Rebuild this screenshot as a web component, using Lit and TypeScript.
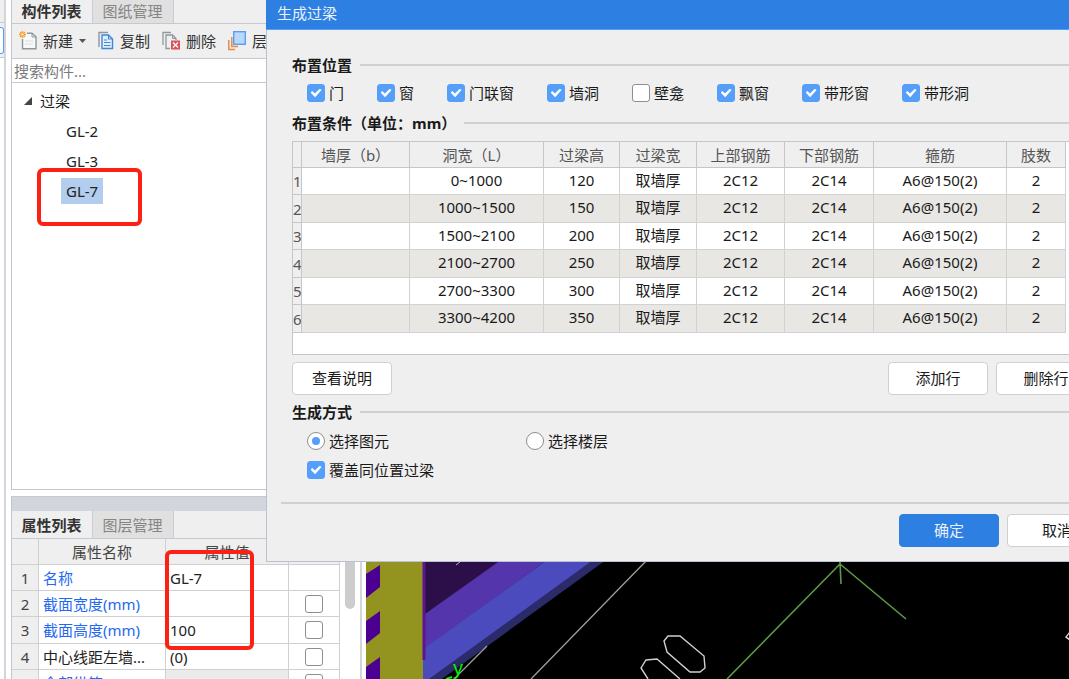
import { LitElement, html, css, svg } from "lit";
import { customElement, state } from "lit/decorators.js";

const controls = css`
  *, *::before, *::after { box-sizing: border-box; }
  button, input, table { font: inherit; color: inherit; }
  button { cursor: pointer; margin: 0; }
  input[type="checkbox"], input[type="radio"] {
    appearance: none;
    flex: none;
    display: grid;
    place-items: center;
    width: 18px;
    height: 18px;
    margin: 0;
    background: #fff;
    border: 1px solid #8e8e8e;
    border-radius: 3px;
  }
  input[type="radio"] { border-radius: 50%; }
  input[type="checkbox"]:checked { background: #559ffb; border-color: #559ffb; }
  input[type="checkbox"]:checked::after {
    content: "";
    width: 11px;
    height: 9px;
    background: #fff;
    clip-path: polygon(0 45%, 16% 28%, 40% 56%, 84% 2%, 100% 18%, 42% 96%);
  }
  input[type="radio"]:checked::after {
    content: "";
    width: 8px;
    height: 8px;
    border-radius: 50%;
    background: #559ffb;
  }
  table { border-collapse: separate; border-spacing: 0; table-layout: fixed; }
  th, td { padding: 0; overflow: hidden; white-space: nowrap; font-weight: 400; }
`;

const icons = {
  create: svg`<svg width="18" height="20" viewBox="0 0 18 20" fill="none">
    <path d="M4.5 6V17.5H17V5.5L13.5 2H8" fill="#f7f8f8"/>
    <path d="M3.5 8V17.8H17V5.8L13 2.2H8" stroke="#8f979c" stroke-width="1.4"/>
    <path d="M13 2.2V6H17" stroke="#8f979c"/>
    <path d="M6 10H14M6 13H14" stroke="#d8dcde"/>
    <path d="M3.5 0V7M0 3.5H7M1 1L6 6M6 1L1 6" stroke="#f5a12d" stroke-width="1.3"/>
    <circle cx="3.5" cy="3.5" r="1.1" fill="#fff"/>
  </svg>`,
  copy: svg`<svg width="16" height="20" viewBox="0 0 16 20" fill="none">
    <path d="M1 16V1.5H10" stroke="#8f979c" stroke-width="1.4"/>
    <path d="M4 4H10.5L14.5 8V17.5H4Z" fill="#e3f0fd" stroke="#3f85dc" stroke-width="1.4"/>
    <path d="M10.5 4V8H14.5M6 9H9M6 11.5H12.5M6 14.5H12.5" stroke="#3f85dc" stroke-width="1.2"/>
  </svg>`,
  remove: svg`<svg width="18" height="20" viewBox="0 0 18 20" fill="none">
    <path d="M1 14V1.5H9" stroke="#8f979c" stroke-width="1.3"/>
    <path d="M8 17.5H4V4H10.5L14 7.5V9" stroke="#8f979c" stroke-width="1.3"/>
    <path d="M10.5 4V7.5H14" stroke="#8f979c"/>
    <rect x="9" y="9.5" width="9" height="9" fill="#d95359"/>
    <path d="M11 11.5L16 16.5M16 11.5L11 16.5" stroke="#fff" stroke-width="1.3"/>
  </svg>`,
  layers: svg`<svg width="18" height="20" viewBox="0 0 18 20" fill="none">
    <path d="M.8 9V18.5H7" stroke="#e58a4b" stroke-width="1.5"/>
    <path d="M3.8 6V15.5H10" stroke="#e58a4b" stroke-width="1.5"/>
    <rect x="5.7" y=".7" width="11.6" height="12.6" fill="#b7d8ff" stroke="#5b9fec" stroke-width="1.4"/>
  </svg>`,
};

@customElement("component-panel")
class ComponentPanel extends LitElement {
  static styles = [controls, css`
    :host { display: flex; flex-direction: column; min-width: 0; min-height: 0; }
    .upper { flex: 1; min-height: 0; display: flex; flex-direction: column; border: 1px solid #c3c6cd; border-top: 0; background: #fff; }
    .tabs { flex: none; display: flex; height: 24px; background: #efefef; border-bottom: 1px solid #c6c9cf; overflow: hidden; }
    .tab { width: 81px; padding: 0 1px 4px 0; border: 0; border-right: 1px solid #c9ccd1; background: #efefef; font-weight: 700; color: #333; line-height: 22px; }
    .tab.idle { background: #e0e0e0; color: #858585; font-weight: 400; }
    .tools { flex: none; display: flex; align-items: center; gap: 12px; height: 35px; padding: 0 7px; background: #efefef; border-bottom: 1px solid #c6c9cf; overflow: hidden; }
    .tool { display: flex; align-items: center; gap: 6px; padding: 0; border: 0; background: none; white-space: nowrap; color: #333; line-height: 22px; }
    .arrow { width: 7px; height: 4px; background: #555; clip-path: polygon(0 0, 100% 0, 50% 100%); }
    .search { flex: none; width: 100%; height: 24px; padding: 0 2px; border: 0; border-bottom: 1px solid #c6c9cf; background: #fff; outline: none; }
    .search::placeholder { color: #7b7b7b; opacity: 1; }
    .tree { margin: 0; padding: 3px 12px; list-style: none; color: #222; }
    .tree ul { margin: 0; padding: 0 0 0 37px; list-style: none; }
    .node { display: flex; align-items: center; gap: 8px; height: 30px; }
    .leaf { padding: 0 5px; line-height: 26px; }
    .leaf.on { background: #b3cdee; }
    .twist { width: 8px; height: 8px; background: #444; clip-path: polygon(100% 0, 100% 100%, 0 100%); }
    .lower { flex: none; height: 183px; margin-top: 6px; border-left: 1px solid #c3c6cd; overflow: hidden; background: #fff; }
    .grip { height: 15px; background: #d2d5db; border-top: 1px solid #c6c9cf; }
    .lower .tabs { height: 28px; }
    .lower .tab { padding-bottom: 0; }
    .sheet { display: flex; align-items: flex-start; justify-content: space-between; }
    .props { width: 328px; color: #222; }
    .props th, .props td { height: 26px; line-height: 22px; border-right: 1px solid #d0d0d0; border-bottom: 1px solid #d0d0d0; }
    .props tbody tr:nth-child(3) > * { height: 27px; }
    .props td { padding-left: 4px; }
    .props th { background: #efefef; color: #444; }
    .props .key { color: #2468f2; }
    .props .plain { color: #222; }
    .props .blank { background: #ebebeb; }
    .props input { margin-left: 12px; }
    .c0 { width: 27px; } .c1 { width: 127px; } .c2 { width: 123px; } .c3 { width: 51px; }
    .bar { width: 10px; height: 70px; background: #cdcdcd; border-radius: 0 0 5px 5px; }
  `];

  @state() private selected = "GL-7";

  private rows = [
    { name: "名称", value: "GL-7", key: true, box: false },
    { name: "截面宽度(mm)", value: "", key: true, box: true },
    { name: "截面高度(mm)", value: "100", key: true, box: true },
    { name: "中心线距左墙...", value: "(0)", key: false, box: true },
    { name: "全部纵筋", value: "", key: true, box: true, blank: true },
  ];

  render() {
    return html`
      <section class="upper">
        <div class="tabs"><button class="tab">构件列表</button><button class="tab idle">图纸管理</button></div>
        <div class="tools">
          <button class="tool">${icons.create}新建<span class="arrow"></span></button>
          <button class="tool">${icons.copy}复制</button>
          <button class="tool">${icons.remove}删除</button>
          <button class="tool">${icons.layers}层间复制</button>
        </div>
        <input class="search" type="text" aria-label="搜索构件" placeholder="搜索构件..." />
        <ul class="tree">
          <li>
            <div class="node"><span class="twist"></span>过梁</div>
            <ul>
              ${["GL-2", "GL-3", "GL-7"].map((n) => html`
                <li class="node" @click=${() => (this.selected = n)}>
                  <span class="leaf ${n === this.selected ? "on" : ""}">${n}</span>
                </li>`)}
            </ul>
          </li>
        </ul>
      </section>
      <section class="lower">
        <div class="grip"></div>
        <div class="tabs"><button class="tab">属性列表</button><button class="tab idle">图层管理</button></div>
        <div class="sheet">
          <table class="props">
            <thead><tr><th class="c0"></th><th class="c1">属性名称</th><th class="c2">属性值</th><th class="c3"></th></tr></thead>
            <tbody>
              ${this.rows.map((r, i) => html`<tr>
                <th>${i + 1}</th>
                <td class=${r.key ? "key" : "plain"}>${r.name}</td>
                <td class=${r.blank ? "blank" : ""}>${r.value}</td>
                <td>${r.box ? html`<input type="checkbox" aria-label=${r.name} />` : ""}</td>
              </tr>`)}
            </tbody>
          </table>
          <div class="bar"></div>
        </div>
      </section>`;
  }
}

@customElement("lintel-dialog")
class LintelDialog extends LitElement {
  static styles = [controls, css`
    :host { display: flex; flex-direction: column; background: #efefef; border: 1px solid #b9c2d0; border-top: 0; color: #1a1a1a; }
    .title { margin: 0 0 0 -1px; padding: 0 11px; height: 30px; line-height: 26px; background: #2d7fe1; border-bottom: 1px solid #559ffb; color: #e8f1fc; font-size: 15px; font-weight: 400; }
    .body { display: flex; flex-direction: column; padding: 24px 25px 0; }
    .head { display: flex; align-items: center; gap: 8px; margin: 0; font-size: 15px; line-height: 22px; font-weight: 700; }
    .head::after { content: ""; flex: 1; height: 2px; background: #d0d0d0; }
    .picks { display: flex; gap: 33px; padding: 6px 15px 8px; }
    .pick { display: flex; align-items: center; gap: 4px; height: 22px; line-height: 22px; white-space: nowrap; }
    .grid { margin-top: 7px; padding-bottom: 21px; background: #fff; border: 1px solid #c6c6c6; }
    .rules { width: 773px; text-align: center; }
    .rules th, .rules td { height: 27px; line-height: 22px; border-right: 1px solid #d2d2d2; border-bottom: 1px solid #d2d2d2; }
    .rules thead th { height: 26px; background: #efefef; color: #555; border-color: #c6c6c6; }
    .rules tbody td { padding-bottom: 3px; }
    .rules tbody tr:nth-child(even) > * { height: 28px; }
    .rules tbody tr:nth-child(even) td { background: #e8e7e4; }
    .rules tbody th { background: #efefef; color: #555; border-color: #c6c6c6; }
    .w0 { width: 9px; } .w1 { width: 108px; } .w2 { width: 134px; } .w3 { width: 76px; } .w4 { width: 77px; }
    .w5 { width: 88px; } .w6 { width: 89px; } .w7 { width: 133px; } .w8 { width: 59px; }
    .actions { display: flex; gap: 8px; padding: 7px 0 6px; }
    .push { margin-left: auto; }
    .btn { width: 100px; height: 33px; padding: 0 0 1px; background: #fff; border: 1px solid #cfcfcf; border-radius: 4px; line-height: 22px; }
    .btn.primary { background: #2d7fe1; border-color: #2d7fe1; color: #e8f1fc; margin-left: auto; }
    .modes { display: grid; grid-template-columns: 219px 1fr; row-gap: 7px; padding: 7px 15px 21px; }
    .foot { display: flex; gap: 8px; margin: 0 14px; padding: 10px 0 14px; border-top: 2px solid #d0d0d0; }
  `];

  private places: [string, boolean][] = [
    ["门", true], ["窗", true], ["门联窗", true], ["墙洞", true],
    ["壁龛", false], ["飘窗", true], ["带形窗", true], ["带形洞", true],
  ];
  private columns = ["", "墙厚（b）", "洞宽（L）", "过梁高", "过梁宽", "上部钢筋", "下部钢筋", "箍筋", "肢数"];
  private spans: [string, string][] = [
    ["0~1000", "120"], ["1000~1500", "150"], ["1500~2100", "200"],
    ["2100~2700", "250"], ["2700~3300", "300"], ["3300~4200", "350"],
  ];

  render() {
    return html`
      <h1 class="title">生成过梁</h1>
      <div class="body">
        <h2 class="head">布置位置</h2>
        <div class="picks">
          ${this.places.map(([name, on]) => html`<label class="pick"><input type="checkbox" .checked=${on} />${name}</label>`)}
        </div>
        <h2 class="head">布置条件（单位：mm）</h2>
        <div class="grid">
          <table class="rules">
            <thead><tr>${this.columns.map((c, i) => html`<th class="w${i}">${c}</th>`)}</tr></thead>
            <tbody>
              ${this.spans.map(([span, height], i) => html`<tr>
                <th>${i + 1}</th><td></td><td>${span}</td><td>${height}</td><td>取墙厚</td>
                <td>2C12</td><td>2C14</td><td>A6@150(2)</td><td>2</td>
              </tr>`)}
            </tbody>
          </table>
        </div>
        <div class="actions">
          <button class="btn">查看说明</button>
          <button class="btn push">添加行</button>
          <button class="btn">删除行</button>
        </div>
        <h2 class="head">生成方式</h2>
        <div class="modes">
          <label class="pick"><input type="radio" name="mode" .checked=${true} />选择图元</label>
          <label class="pick"><input type="radio" name="mode" />选择楼层</label>
          <label class="pick"><input type="checkbox" .checked=${true} />覆盖同位置过梁</label>
        </div>
      </div>
      <div class="foot">
        <button class="btn primary">确定</button>
        <button class="btn">取消</button>
      </div>`;
  }
}

@customElement("app-root")
class AppRoot extends LitElement {
  static styles = css`
    *, *::before, *::after { box-sizing: border-box; }
    :host {
      display: block;
      position: relative;
      height: 100vh;
      overflow: hidden;
      background: #fff;
      font-family: "Noto Sans", "Noto Sans CJK SC", sans-serif;
      font-size: 15px;
      line-height: 22px;
    }
    .desk { display: grid; grid-template-columns: 6px 344px 1fr; column-gap: 5px; height: 100%; }
    .rail { display: flex; flex-direction: column; border-right: 2px solid #d3d5da; background: #fff; }
    .rail-top { height: 58px; padding-top: 22px; background: #efefef; border-bottom: 1px solid #c6c9cf; }
    .rail-line { border-top: 1px solid #c6c9cf; }
    .rail-field { height: 27px; margin-top: 4px; border: 1px solid #559ffb; border-left: 0; border-radius: 0 3px 3px 0; background: #fff; }
    .view { display: flex; align-items: flex-end; min-width: 0; border-left: 2px solid #d3d5da; padding-left: 4px; overflow: hidden; }
    .canvas { display: flex; align-items: flex-end; flex: 1; min-width: 0; height: 100%; background: #000; overflow: hidden; }
    .drawing { flex: none; display: block; }
    .dialog { position: absolute; left: 266px; right: -53px; top: 0; }
    .mark { position: absolute; border: 4px solid #fb2115; border-radius: 6px; pointer-events: none; }
    .mark.tree { left: 37px; top: 168px; width: 105px; height: 58px; }
    .mark.values { left: 165px; bottom: 29px; width: 89px; height: 100px; }
  `;

  render() {
    return html`
      <div class="desk">
        <div class="rail"><div class="rail-top"><div class="rail-line"></div><div class="rail-field"></div></div></div>
        <component-panel></component-panel>
        <div class="view">
          <div class="canvas">
            <svg class="drawing" width="703" height="119" viewBox="366 560 703 119" fill="none" aria-hidden="true">
              <path d="M423 560H505L423 618Z" fill="#2c0e49"/>
              <path d="M501 560H547L425 648V614Z" fill="#5535ab"/>
              <path d="M547 560H595L430 679H423V649Z" fill="#4b4bbd"/>
              <path d="M593 560H606L442 679H429Z" fill="#2b2b69"/>
              <path d="M366 560H423V679H366Z" fill="#93931f"/>
              <path d="M424 560V660" stroke="#5d1591" stroke-width="3"/>
              <path d="M366 574L380 565V587L366 598ZM366 621L380 611V633L366 644ZM366 667L380 657V679H366Z" fill="#4b0092"/>
              <path d="M456 565L460 562" stroke="#b9a9cc"/>
              <path d="M647 560L531 679M487 646L454 679" stroke="#a0a09c" stroke-width="1.3"/>
              <path d="M664 641L668 636H680L704 656L705 668L700 672H690L667 652ZM648 679L641 668L646 660L657 659L680 679" stroke="#d0d0d0" stroke-width="1.4"/>
              <path d="M840 564L727 679M840 562L841 584M840 564L906 619" stroke="#5d9a45" stroke-width="1.6"/>
              <path d="M1070 632L1066 637L1070 640" stroke="#ddd" stroke-width="1.4"/>
              <path d="M446 679L452 677" stroke="#00f000" stroke-width="2"/>
              <text x="453" y="675" fill="#00f000" font-size="20" font-family="Liberation Sans, sans-serif">y</text>
            </svg>
          </div>
        </div>
      </div>
      <lintel-dialog class="dialog"></lintel-dialog>
      <div class="mark tree"></div>
      <div class="mark values"></div>`;
  }
}
